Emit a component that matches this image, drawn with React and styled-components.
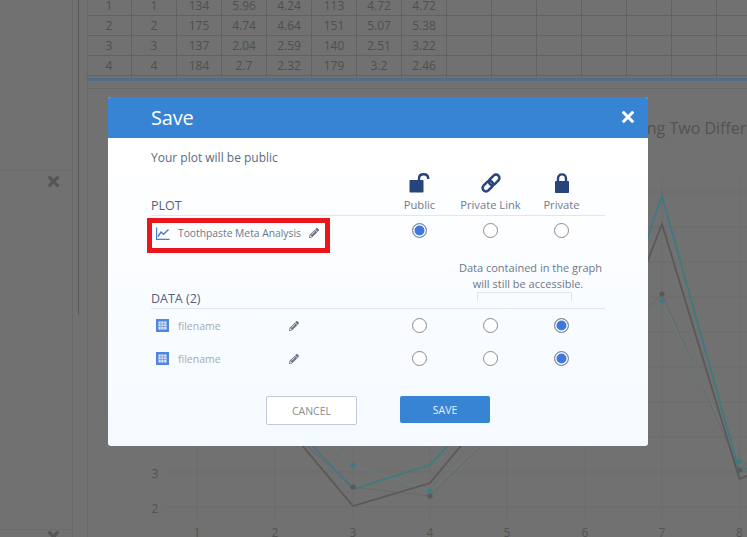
import React from "react";
import styled, { createGlobalStyle } from "styled-components";
import { FaPencilAlt } from "react-icons/fa";

const Global = createGlobalStyle`
  html, body { margin: 0; padding: 0; background: #717171; }
  * { box-sizing: border-box; }
  body { font-family: "Open Sans", "Liberation Sans", sans-serif; }
`;

const Page = styled.div`
  position: relative; width: 747px; height: 537px; overflow: hidden;
  display: flex; background: #717171; color: #4f4f4f;
`;
const Sidebar = styled.aside`
  width: 73px; height: 100%; flex: none; border-right: 1px solid #686868;
  padding-top: 170px; display: flex; flex-direction: column; justify-content: space-between;
`;
const SideRow = styled.div`
  height: 22px; display: flex; justify-content: flex-end; align-items: ${p => (p.$last ? "flex-start" : "center")};
  border-top: 1px solid #6a6a6a; padding-right: 12px;
  margin-bottom: ${p => (p.$last ? "-14px" : 0)};
  color: #565656;
`;
const Splitter = styled.div`
  width: 14px; flex: none; padding-left: 5px;
`;
const SplitLine = styled.div`
  width: 1px; height: 315px; background: #595959;
`;
const Main = styled.main`
  flex: 1; min-width: 0; border-left: 1px solid #686868; margin-top: -4px;
  display: flex; flex-direction: column;
`;
const Sheet = styled.div`
  display: grid; grid-template-columns: repeat(15, 45px); grid-auto-rows: 20px; width: 675px; margin-left: -1px;
`;
const Cell = styled.div`
  border-right: 1px solid #626262; border-bottom: 1px solid #626262;
  font-size: 12px; line-height: 19px; text-align: center; color: #4f4f4f;
`;
const SheetStub = styled.div`
  height: 2px; display: grid; grid-template-columns: repeat(15, 45px); width: 675px;
  margin-left: -1px;
`;
const StubCell = styled.div` border-right: 1px solid #626262; `;
const SheetBar = styled.div` height: 3px; background: #566c82; margin-left: -2px; `;
const ChartPanel = styled.div`
  margin-top: 7px; border-top: 1px solid #686868; flex: 1; min-height: 0;
`;
const ChartSvg = styled.svg` display: block; width: 659px; height: 448px; `;
const ChartText = styled.text`
  font-family: "Open Sans", "Liberation Sans", sans-serif; fill: #535353; font-size: ${p => p.$size || 12}px;
`;

const Dialog = styled.section`
  position: absolute; left: 108px; top: 97px; width: 540px; height: 349px;
  border-radius: 3px; overflow: hidden;
  background: linear-gradient(#ffffff 15%, #f4faff 100%);
  display: flex; flex-direction: column;
`;
const DialogHeader = styled.header`
  height: 41px; flex: none; background: #3783d4; color: #fff;
  display: flex; align-items: center; justify-content: space-between;
  padding: 0 13px 1px 43px;
`;
const DialogTitle = styled.h1`
  margin: 0; font-size: 20px; font-weight: 400; letter-spacing: -0.2px; color: #fff;
`;
const DialogBody = styled.div`
  padding: 12px 43px 0; flex: 1; display: flex; flex-direction: column;
`;
const Intro = styled.p`
  margin: 0; height: 16px; font-size: 12px; line-height: 16px; color: #5c6b7e;
`;
const Grid = styled.div`
  display: grid; grid-template-columns: 233px 71px 71px 71px 8px;
`;
const HeaderGrid = styled(Grid)`
  height: ${p => p.$h}px; align-items: end; border-bottom: 1px solid #e3e6ec; padding-bottom: 3px;
`;
const SectionTitle = styled.h2`
  margin: 0 0 -2px; font-size: 12.5px; font-weight: 400; line-height: 17px; color: #53617a;
`;
const PrivacyHead = styled.div`
  display: flex; flex-direction: column; align-items: center; gap: 4px; margin-bottom: -1px;
  font-size: 11.2px; line-height: 16px; color: #6d7b8e; white-space: nowrap;
  svg { display: block; }
`;
const NameCell = styled.div`
  display: flex; align-items: center; gap: 9px; padding-left: 5px;
  font-size: 10.5px; color: #a6abb1;
`;
const Highlight = styled.div`
  display: inline-flex; align-items: center; height: 35px; width: 183px;
  margin: 2px 0 0 -4px; border: 5px solid #e9161b; padding: 0 0 5px 4px; gap: 8px;
  font-size: 10.3px; color: #6d7888; white-space: nowrap;
`;
const RowGrid = styled(Grid)`
  height: ${p => p.$h}px; align-items: center;
`;
const RadioCell = styled.div`
  display: flex; justify-content: center; align-items: center;
  padding-bottom: ${p => p.$pb || 0}px;
`;
const Radio = styled.input.attrs({ type: "radio", readOnly: true })`
  appearance: none; width: 15px; height: 15px; margin: 0; border-radius: 50%;
  background: #fff; border: 1px solid #8a8a8a;
  &:checked { background: #3f78dd; box-shadow: inset 0 0 0 1.5px #fff; }
`;
const NoteCell = styled.div`
  grid-column: 3 / span 2; align-self: end;
`;
const Note = styled.div`
  font-size: 11px; line-height: 16px; color: #6d7888; text-align: center; white-space: nowrap;
  padding-left: 4px;
`;
const Bracket = styled.div`
  width: 95px; height: 9px; margin: 0 0 4px 22px;
  border: 1px solid #e0e4ea; border-bottom: 0;
`;
const EditIcon = styled(FaPencilAlt)`
  color: #6a7284; font-size: 10px; flex: none; margin-left: ${p => p.$ml || 0}px;
`;
const Footer = styled.div`
  display: flex; gap: 43px; padding-left: 115px; margin-top: 21px; align-items: flex-start;
`;
const Button = styled.button`
  width: ${p => (p.$primary ? 90 : 91)}px; height: ${p => (p.$primary ? 27 : 29)}px; border-radius: 2px; padding: 0;
  font-family: inherit; font-size: 10.5px;
  background: ${p => (p.$primary ? "#3783d4" : "#fff")};
  color: ${p => (p.$primary ? "#e6effa" : "#8a8d90")};
  border: ${p => (p.$primary ? "0" : "1px solid #c4c9d6")};
`;

const rows = [
  [1, 1, 134, 5.96, 4.24, 113, 4.72, 4.72],
  [2, 2, 175, 4.74, 4.64, 151, 5.07, 5.38],
  [3, 3, 137, 2.04, 2.59, 140, 2.51, 3.22],
  [4, 4, 184, 2.7, 2.32, 179, 3.2, 2.46],
];
const xs = [197, 275, 353, 430, 507, 585, 662, 739.5];
const pts = a => a.map((y, i) => `${xs[i]},${y}`).join(" ");
const thickTeal = [300, 406, 489, 465, 380, 419, 196, 472];
const thickGray = [320, 413, 506, 483, 390, 422, 224, 479];
const thinTeal = [330, 391, 465, 491, 420, 389, 301, 461];
const thinGray = [340, 417, 487, 496, 420, 366, 294, 470];

const NAVY = "#27457b";

const CloseGlyph = ({ size, weight = 3, color = "#fff" }) => (
  <svg width={size} height={size} viewBox="0 0 12 12">
    <path d="M1.5 1.5 L10.5 10.5 M10.5 1.5 L1.5 10.5" stroke={color} strokeWidth={weight} />
  </svg>
);
const UnlockIcon = () => (
  <svg width="21" height="20" viewBox="0 0 21 20">
    <rect x="0.5" y="7" width="14" height="12.5" rx="0.8" fill={NAVY} />
    <path d="M10 7.5 V5.5 C10 2.8 12 1.3 14.7 1.3 C17.5 1.3 19.3 3 19.3 6" fill="none" stroke={NAVY} strokeWidth="2.4" />
  </svg>
);
const LinkIcon = () => (
  <svg width="20" height="20" viewBox="0 0 20 20">
    <g fill="none" stroke={NAVY} strokeWidth="2.5" transform="rotate(-45 10 10)">
      <rect x="-0.5" y="6.6" width="12" height="6.8" rx="3.4" />
      <rect x="8.5" y="6.6" width="12" height="6.8" rx="3.4" />
    </g>
  </svg>
);
const LockIcon = () => (
  <svg width="14" height="20" viewBox="0 0 14 20">
    <rect x="0" y="8" width="14" height="12" rx="0.8" fill={NAVY} />
    <path d="M3 9 V5.5 C3 3 4.6 1.4 7 1.4 C9.4 1.4 11 3 11 5.5 V9" fill="none" stroke={NAVY} strokeWidth="2.4" />
  </svg>
);
const TrendIcon = () => (
  <svg width="14" height="13" viewBox="0 0 14 13" style={{ flex: "none" }}>
    <path d="M0.6 0.5 V12.3 H13.5" fill="none" stroke="#4a7dd0" strokeWidth="1.2" />
    <path d="M2 9.5 L5 5 L7.5 7.2 L12.5 2.5" fill="none" stroke="#4a7dd0" strokeWidth="1.4" />
  </svg>
);
const GridIcon = () => (
  <svg width="13" height="13" viewBox="0 0 13 13" style={{ flex: "none" }}>
    <rect width="13" height="13" fill="#4f86de" />
    <rect x="2.5" y="2.5" width="8" height="8" fill="#dfe8f8" />
    <path d="M2.5 5 H10.5 M2.5 7.5 H10.5 M5 2.5 V10.5 M7.7 2.5 V10.5" stroke="#6f9ae0" strokeWidth="0.8" />
  </svg>
);

export default function App() {
  return (
    <Page>
      <Global />
      <Sidebar>
        <SideRow><CloseGlyph size={13} weight={3} color="#565656" /></SideRow>
        <SideRow $last><CloseGlyph size={13} weight={3} color="#565656" /></SideRow>
      </Sidebar>
      <Splitter><SplitLine /></Splitter>
      <Main>
        <Sheet>
          {Array.from({ length: 60 }, (_, i) => {
            const r = rows[Math.floor(i / 15)];
            const v = r[i % 15];
            return <Cell key={i}>{v}</Cell>;
          })}
        </Sheet>
        <SheetStub>{Array.from({ length: 15 }, (_, i) => <StubCell key={i} />)}</SheetStub>
        <SheetBar />
        <ChartPanel>
          <ChartSvg viewBox="88 89 659 448">
            <ChartText x="583" y="134" $size={16}>Comparing Two Different Treatments</ChartText>
            {[507, 472, 437, 402, 367, 332, 297, 262, 227, 192].map(y => (
              <line key={y} x1="165" x2="747" y1={y} y2={y} stroke="#6d6d6d" />
            ))}
            {xs.map(x => <line key={x} x1={x} x2={x} y1="178" y2="520" stroke="#6d6d6d" />)}
            <polyline points={pts(thinGray) + " 760,450"} fill="none" stroke="#666" strokeWidth="0.8" />
            <polyline points={pts(thinTeal) + " 760,440"} fill="none" stroke="#5f8284" strokeWidth="0.8" />
            <polyline points={pts(thickGray) + " 760,470"} fill="none" stroke="#5a5858" strokeWidth="1.8" />
            <polyline points={pts(thickTeal) + " 760,462"} fill="none" stroke="#3f7a80" strokeWidth="1.8" />
            {thinGray.map((y, i) => <circle key={i} cx={xs[i]} cy={y} r="2.6" fill="#5a5858" />)}
            {thinTeal.map((y, i) => <circle key={i} cx={xs[i]} cy={y} r="2.6" fill="#3f7a80" />)}
            <ChartText x="155" y="478" textAnchor="middle">3</ChartText>
            <ChartText x="155" y="513" textAnchor="middle">2</ChartText>
            {xs.map((x, i) => <ChartText key={i} x={x} y="537" textAnchor="middle">{i + 1}</ChartText>)}
          </ChartSvg>
        </ChartPanel>
      </Main>

      <Dialog>
        <DialogHeader>
          <DialogTitle>Save</DialogTitle>
          <CloseGlyph size={14} weight={2.6} />
        </DialogHeader>
        <DialogBody>
          <Intro>Your plot will be public</Intro>
          <HeaderGrid $h={50}>
            <SectionTitle>PLOT</SectionTitle>
            <PrivacyHead><UnlockIcon />Public</PrivacyHead>
            <PrivacyHead><LinkIcon />Private Link</PrivacyHead>
            <PrivacyHead><LockIcon />Private</PrivacyHead>
          </HeaderGrid>
          <RowGrid $h={37}>
            <Highlight><TrendIcon />Toothpaste Meta Analysis<EditIcon /></Highlight>
            <RadioCell $pb={9}><Radio checked /></RadioCell>
            <RadioCell $pb={9}><Radio /></RadioCell>
            <RadioCell $pb={9}><Radio /></RadioCell>
          </RowGrid>
          <HeaderGrid $h={56}>
            <SectionTitle>DATA (2)</SectionTitle>
            <span />
            <NoteCell>
              <Note>Data contained in the graph<br />will still be accessible.</Note>
              <Bracket />
            </NoteCell>
          </HeaderGrid>
          {[0, 1].map(i => (
            <RowGrid $h={33} key={i}>
              <NameCell>
                <GridIcon />
                filename
                <EditIcon $ml={59} />
              </NameCell>
              <RadioCell><Radio /></RadioCell>
              <RadioCell><Radio /></RadioCell>
              <RadioCell><Radio checked /></RadioCell>
            </RowGrid>
          ))}
          <Footer>
            <Button>CANCEL</Button>
            <Button $primary>SAVE</Button>
          </Footer>
        </DialogBody>
      </Dialog>
    </Page>
  );
}
